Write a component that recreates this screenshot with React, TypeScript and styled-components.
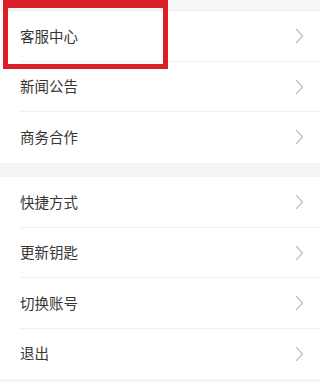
import React from "react";
import styled, { createGlobalStyle } from "styled-components";

const GlobalStyle = createGlobalStyle`
  html, body {
    margin: 0;
    padding: 0;
    background: #f4f4f6;
  }
  body {
    font-family: "Noto Sans CJK SC", "Noto Sans", sans-serif;
  }
`;

const sections = [
  ["客服中心", "新闻公告", "商务合作"],
  ["快捷方式", "更新钥匙", "切换账号", "退出"],
];

const Chevron = () => (
  <svg width="9" height="16" viewBox="0 0 9 16" fill="none">
    <path d="M1.5 1.5 L7.5 8 L1.5 14.5" stroke="#c4c4c4" strokeWidth="1.4" strokeLinecap="round" strokeLinejoin="round" />
  </svg>
);

const App = () => {
  return (
    <Page>
      <GlobalStyle />
      <TopStrip />
      {sections.map((items, si) => (
        <Section key={si} first={si === 0}>
          {items.map((label, i) => (
            <Row key={label} last={i === items.length - 1}>
              <Label>{label}</Label>
              <Chevron />
            </Row>
          ))}
        </Section>
      ))}
      <Highlight />
    </Page>
  );
};

const Page = styled.div`
  position: relative;
  width: 320px;
  height: 382px;
  overflow: hidden;
  background: #f4f4f6;
  display: flex;
  flex-direction: column;
`;

const TopStrip = styled.div`
  height: 10px;
  flex-shrink: 0;
  background: #f7f7f8;
  border-bottom: 1px solid #efefef;
`;

const Section = styled.div<{ first?: boolean }>`
  flex-shrink: 0;
  background: #ffffff;
  margin-top: ${(p) => (p.first ? "0" : "14.5px")};
`;

const Row = styled.div<{ last?: boolean }>`
  position: relative;
  height: 50.5px;
  display: flex;
  align-items: center;
  justify-content: space-between;
  padding: 0 16px 0 20px;
  box-sizing: border-box;

  &::after {
    content: "";
    display: ${(p) => (p.last ? "none" : "block")};
    position: absolute;
    left: 20px;
    right: 0;
    bottom: 0;
    height: 1px;
    background: #f0f0f0;
  }
`;

const Label = styled.span`
  font-size: 14.5px;
  color: #363636;
  margin-top: -2px;
`;

const Highlight = styled.div`
  position: absolute;
  left: 3px;
  top: 0;
  width: 165px;
  height: 69px;
  border-style: solid;
  border-color: #d9202a;
  border-width: 4px 5px 5px 5px;
  box-shadow: inset 0 4px 0 #d9202a;
  box-sizing: border-box;
  pointer-events: none;
`;

export default App;
